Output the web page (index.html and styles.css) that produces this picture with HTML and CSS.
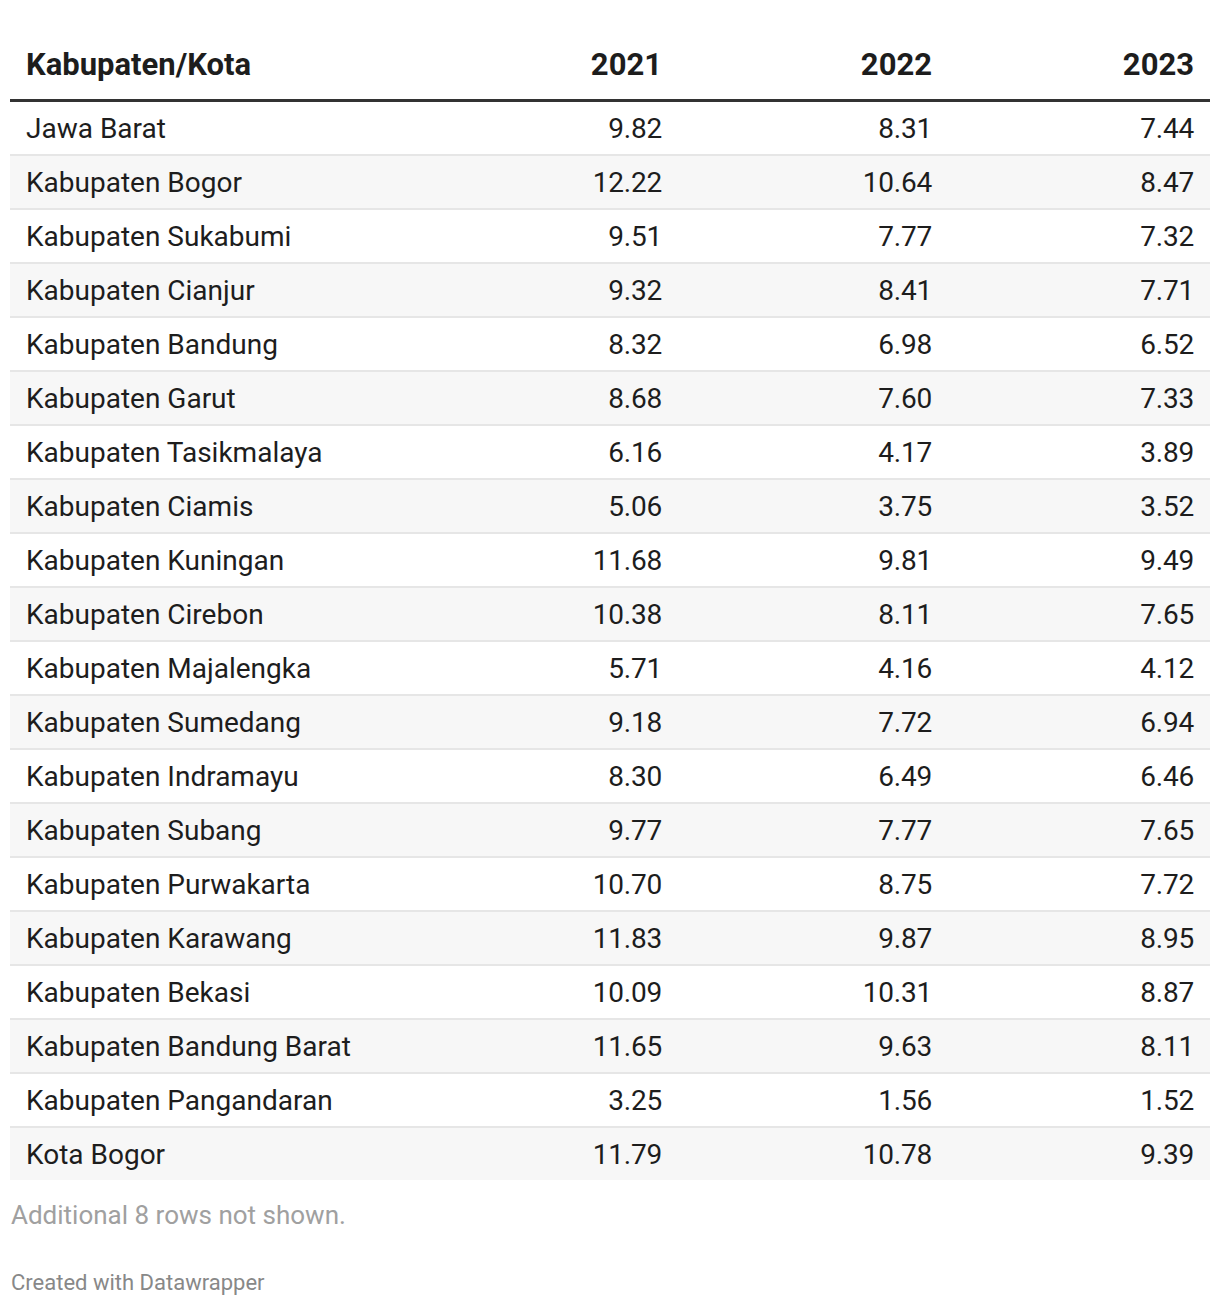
FILE: index.html
```html
<!DOCTYPE html>
<html>
<head>
<meta charset="utf-8">
<link rel="stylesheet" href="styles.css">
</head>
<body>
<div class="chart">
  <table class="data">
    <colgroup>
      <col class="c1"><col class="c2"><col class="c3"><col class="c4">
    </colgroup>
    <thead>
      <tr><th class="l">Kabupaten/Kota</th><th>2021</th><th>2022</th><th>2023</th></tr>
    </thead>
    <tbody>
      <tr><td class="l">Jawa Barat</td><td>9.82</td><td>8.31</td><td>7.44</td></tr>
      <tr><td class="l">Kabupaten Bogor</td><td>12.22</td><td>10.64</td><td>8.47</td></tr>
      <tr><td class="l">Kabupaten Sukabumi</td><td>9.51</td><td>7.77</td><td>7.32</td></tr>
      <tr><td class="l">Kabupaten Cianjur</td><td>9.32</td><td>8.41</td><td>7.71</td></tr>
      <tr><td class="l">Kabupaten Bandung</td><td>8.32</td><td>6.98</td><td>6.52</td></tr>
      <tr><td class="l">Kabupaten Garut</td><td>8.68</td><td>7.60</td><td>7.33</td></tr>
      <tr><td class="l">Kabupaten Tasikmalaya</td><td>6.16</td><td>4.17</td><td>3.89</td></tr>
      <tr><td class="l">Kabupaten Ciamis</td><td>5.06</td><td>3.75</td><td>3.52</td></tr>
      <tr><td class="l">Kabupaten Kuningan</td><td>11.68</td><td>9.81</td><td>9.49</td></tr>
      <tr><td class="l">Kabupaten Cirebon</td><td>10.38</td><td>8.11</td><td>7.65</td></tr>
      <tr><td class="l">Kabupaten Majalengka</td><td>5.71</td><td>4.16</td><td>4.12</td></tr>
      <tr><td class="l">Kabupaten Sumedang</td><td>9.18</td><td>7.72</td><td>6.94</td></tr>
      <tr><td class="l">Kabupaten Indramayu</td><td>8.30</td><td>6.49</td><td>6.46</td></tr>
      <tr><td class="l">Kabupaten Subang</td><td>9.77</td><td>7.77</td><td>7.65</td></tr>
      <tr><td class="l">Kabupaten Purwakarta</td><td>10.70</td><td>8.75</td><td>7.72</td></tr>
      <tr><td class="l">Kabupaten Karawang</td><td>11.83</td><td>9.87</td><td>8.95</td></tr>
      <tr><td class="l">Kabupaten Bekasi</td><td>10.09</td><td>10.31</td><td>8.87</td></tr>
      <tr><td class="l">Kabupaten Bandung Barat</td><td>11.65</td><td>9.63</td><td>8.11</td></tr>
      <tr><td class="l">Kabupaten Pangandaran</td><td>3.25</td><td>1.56</td><td>1.52</td></tr>
      <tr><td class="l">Kota Bogor</td><td>11.79</td><td>10.78</td><td>9.39</td></tr>
    </tbody>
  </table>
  <p class="more">Additional 8 rows not shown.</p>
  <p class="credit">Created with Datawrapper</p>
</div>
</body>
</html>
```
FILE: styles.css
```css
html, body {
  margin: 0;
  padding: 0;
  background: #ffffff;
}
body {
  font-family: Roboto, "Liberation Sans", sans-serif;
  color: #1d1d1d;
}
.chart {
  padding: 0 10px;
}
.data {
  width: 1200px;
  border-collapse: collapse;
  table-layout: fixed;
  font-size: 28px;
}
.c1 { width: 400px; }
.c2 { width: 268px; }
.c3 { width: 270px; }
.c4 { width: 262px; }
.data th {
  font-weight: 700;
  font-size: 31px;
  text-align: right;
  height: 100px;
  padding: 0 16px;
  box-sizing: border-box;
  vertical-align: middle;
  padding-top: 30px;
  padding-bottom: 0;
  line-height: 1;
  border-bottom: 3px solid #333333;
}
.data td {
  text-align: right;
  height: 50px;
  padding: 2px 16px 0;
  line-height: 1;
  vertical-align: middle;
  border-top: 2px solid #e6e6e6;
  letter-spacing: -0.2px;
}
.data td.l {
  letter-spacing: 0;
}
.data tbody tr:first-child td {
  border-top: none;
}
.data tbody tr:nth-child(even) td {
  background: #f7f7f7;
}
.data .l {
  text-align: left;
}
.more {
  margin: 20px 0 0 1px;
  font-size: 26px;
  color: #a0a0a0;
  line-height: 30px;
}
.credit {
  margin: 40px 0 0 1px;
  font-size: 22px;
  color: #888888;
  line-height: 26px;
}
```
